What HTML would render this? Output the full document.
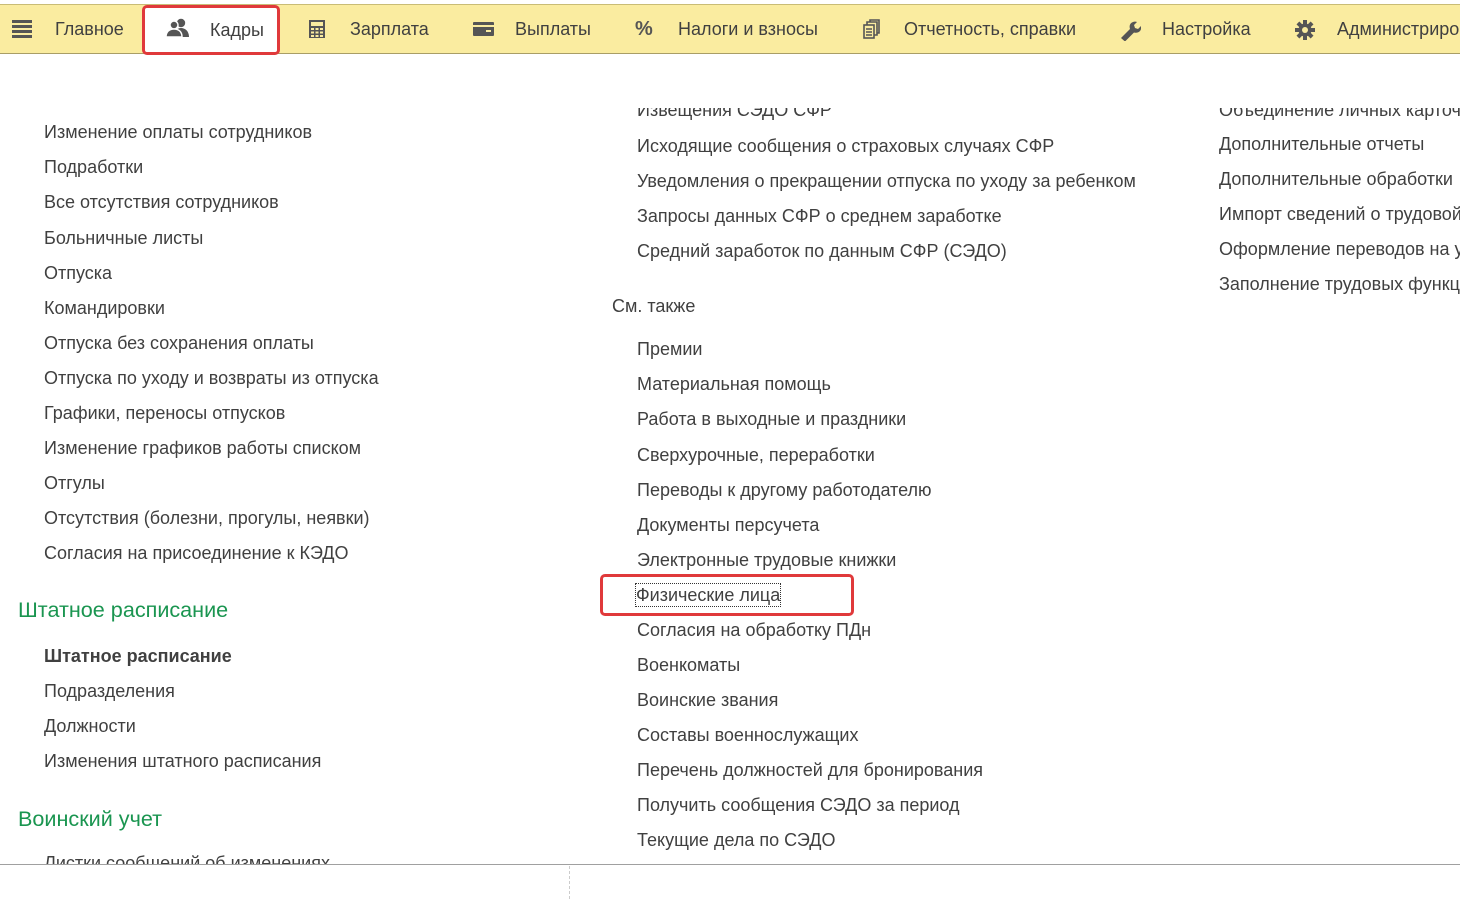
<!DOCTYPE html>
<html><head><meta charset="utf-8"><style>
html,body{margin:0;width:1460px;height:899px;overflow:hidden}
body{background:#fff;font-family:"Liberation Sans",Arial,sans-serif;color:#404040;position:relative}
#bar{position:absolute;left:0;top:4px;width:1460px;height:48px;background:#faeca0;border-top:1px solid #c9bc76;border-bottom:1px solid #a99e66}
.t{position:absolute;top:0;height:48px;line-height:48px;font-size:18px;color:#404040;white-space:nowrap}
.ic{position:absolute;top:14px}
#kad{position:absolute;left:142px;top:5px;width:132px;height:44px;background:#fff;border:3px solid #e0393b;border-radius:5px}
#scroll{position:absolute;left:0;top:108px;width:1460px;height:756px;overflow:hidden}
.i{position:absolute;font-size:18px;line-height:22px;white-space:nowrap;color:#404040}
.h{position:absolute;font-size:21.6px;line-height:26px;color:#1a9550;white-space:nowrap}
#bot{position:absolute;left:0;top:864px;width:1460px;height:1px;background:#a0a0a0}
#dash{position:absolute;left:569px;top:866px;height:33px;border-left:1px dashed #ccc}
</style></head><body>
<div id="bar">
<svg class="ic" style="left:12px;top:15px" width="20" height="18"><g fill="#555"><rect y="0" width="20" height="3"/><rect y="5" width="20" height="3"/><rect y="10" width="20" height="3"/><rect y="15" width="20" height="3"/></g></svg>
<div class="t" style="left:55px">Главное</div>
<svg class="ic" style="left:308px;top:14px" width="18" height="20"><rect x="1" y="1" width="16" height="18" fill="#555"/><g fill="#faeca0"><rect x="3" y="3" width="12" height="4"/><rect x="3" y="9" width="3" height="2"/><rect x="7.5" y="9" width="3" height="2"/><rect x="12" y="9" width="3" height="2"/><rect x="3" y="12.5" width="3" height="2"/><rect x="7.5" y="12.5" width="3" height="2"/><rect x="12" y="12.5" width="3" height="2"/><rect x="3" y="16" width="3" height="2"/><rect x="7.5" y="16" width="3" height="2"/><rect x="12" y="16" width="3" height="2"/></g></svg>
<div class="t" style="left:350px">Зарплата</div>
<svg class="ic" style="left:473px;top:17px" width="21" height="14"><rect width="21" height="14" rx="1" fill="#555"/><rect x="0" y="3" width="21" height="2" fill="#faeca0"/><rect x="13" y="8" width="5" height="2" fill="#faeca0"/></svg>
<div class="t" style="left:515px">Выплаты</div>
<div class="t" style="left:635px;font-weight:bold;color:#555;font-size:20px">%</div>
<div class="t" style="left:678px">Налоги и взносы</div>
<svg class="ic" style="left:863px;top:14px" width="17" height="20"><g fill="none" stroke="#555" stroke-width="1.6"><rect x="1" y="6" width="10" height="13"/><path d="M4 6V3h10v13h-3M7 3V1h9v13h-2"/><path d="M3 10h6M3 13h6M3 16h6"/></g></svg>
<div class="t" style="left:904px">Отчетность, справки</div>
<svg class="ic" style="left:1119px;top:14px" width="22" height="22"><path d="M2 19l9-9c-1-3 0-6 3-7 1-.5 3-.5 4 0l-3 3 1 3 3 1 3-3c.5 2 0 4-1 5-2 2-4 2-6 1.5l-9 9z" fill="#555"/></svg>
<div class="t" style="left:1162px">Настройка</div>
<svg class="ic" style="left:1295px;top:15px" width="20" height="20" viewBox="0 0 20 20"><g fill="#555"><circle cx="10" cy="10" r="6.5"/><rect x="8" y="0" width="4" height="20"/><rect x="0" y="8" width="20" height="4"/><rect x="8" y="0" width="4" height="20" transform="rotate(45 10 10)"/><rect x="8" y="0" width="4" height="20" transform="rotate(-45 10 10)"/></g><circle cx="10" cy="10" r="3" fill="#faeca0"/></svg>
<div class="t" style="left:1337px">Администрирование</div>
</div>
<div id="kad">
<svg style="position:absolute;left:21px;top:10px" width="24" height="20"><g fill="#555"><circle cx="15" cy="5" r="4.2"/><path d="M8 19c0-6 3-9 7-9s8 3 8 9z"/><circle cx="8" cy="7" r="4" stroke="#fff" stroke-width="1.5"/><path d="M0 19c0-5 3-8 8-8s8 3 8 8z" stroke="#fff" stroke-width="1.5"/></g></svg>
<div style="position:absolute;left:65px;top:0;line-height:44px;font-size:18px;color:#404040">Кадры</div>
</div>

<div id="scroll">
<div style="position:absolute;left:0;top:-108px;width:1460px;height:870px">
<div class="i" style="left:44px;top:121px">Изменение оплаты сотрудников</div>
<div class="i" style="left:44px;top:156px">Подработки</div>
<div class="i" style="left:44px;top:191px">Все отсутствия сотрудников</div>
<div class="i" style="left:44px;top:227px">Больничные листы</div>
<div class="i" style="left:44px;top:262px">Отпуска</div>
<div class="i" style="left:44px;top:297px">Командировки</div>
<div class="i" style="left:44px;top:332px">Отпуска без сохранения оплаты</div>
<div class="i" style="left:44px;top:367px">Отпуска по уходу и возвраты из отпуска</div>
<div class="i" style="left:44px;top:402px">Графики, переносы отпусков</div>
<div class="i" style="left:44px;top:437px">Изменение графиков работы списком</div>
<div class="i" style="left:44px;top:472px">Отгулы</div>
<div class="i" style="left:44px;top:507px">Отсутствия (болезни, прогулы, неявки)</div>
<div class="i" style="left:44px;top:542px">Согласия на присоединение к КЭДО</div>
<div class="h" style="left:18px;top:597px">Штатное расписание</div>
<div class="i" style="left:44px;top:645px;font-weight:bold">Штатное расписание</div>
<div class="i" style="left:44px;top:680px">Подразделения</div>
<div class="i" style="left:44px;top:715px">Должности</div>
<div class="i" style="left:44px;top:750px">Изменения штатного расписания</div>
<div class="h" style="left:18px;top:806px">Воинский учет</div>
<div class="i" style="left:44px;top:852px">Листки сообщений об изменениях</div>

<div class="i" style="left:637px;top:99px">Извещения СЭДО СФР</div>
<div class="i" style="left:637px;top:135px">Исходящие сообщения о страховых случаях СФР</div>
<div class="i" style="left:637px;top:170px">Уведомления о прекращении отпуска по уходу за ребенком</div>
<div class="i" style="left:637px;top:205px">Запросы данных СФР о среднем заработке</div>
<div class="i" style="left:637px;top:240px">Средний заработок по данным СФР (СЭДО)</div>
<div class="i" style="left:612px;top:295px">См. также</div>
<div class="i" style="left:637px;top:338px">Премии</div>
<div class="i" style="left:637px;top:373px">Материальная помощь</div>
<div class="i" style="left:637px;top:408px">Работа в выходные и праздники</div>
<div class="i" style="left:637px;top:444px">Сверхурочные, переработки</div>
<div class="i" style="left:637px;top:479px">Переводы к другому работодателю</div>
<div class="i" style="left:637px;top:514px">Документы персучета</div>
<div class="i" style="left:637px;top:549px">Электронные трудовые книжки</div>
<div style="position:absolute;left:600px;top:574px;width:248px;height:36px;border:3px solid #e0393b;border-radius:5px"></div>
<div class="i" style="left:636px;top:584px;outline:1px dotted #333">Физические лица</div>
<div class="i" style="left:637px;top:619px">Согласия на обработку ПДн</div>
<div class="i" style="left:637px;top:654px">Военкоматы</div>
<div class="i" style="left:637px;top:689px">Воинские звания</div>
<div class="i" style="left:637px;top:724px">Составы военнослужащих</div>
<div class="i" style="left:637px;top:759px">Перечень должностей для бронирования</div>
<div class="i" style="left:637px;top:794px">Получить сообщения СЭДО за период</div>
<div class="i" style="left:637px;top:829px">Текущие дела по СЭДО</div>

<div class="i" style="left:1219px;top:99px">Объединение личных карточек</div>
<div class="i" style="left:1219px;top:133px">Дополнительные отчеты</div>
<div class="i" style="left:1219px;top:168px">Дополнительные обработки</div>
<div class="i" style="left:1219px;top:203px">Импорт сведений о трудовой деятельности</div>
<div class="i" style="left:1219px;top:238px">Оформление переводов на удаленную работу</div>
<div class="i" style="left:1219px;top:273px">Заполнение трудовых функций</div>
</div>
</div>
<div id="bot"></div>
<div id="dash"></div>
</body></html>
